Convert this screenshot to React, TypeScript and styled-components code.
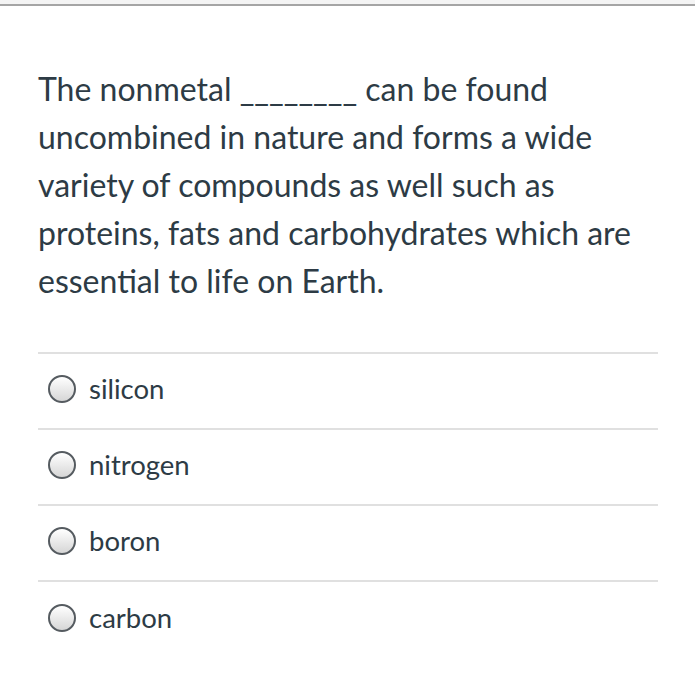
import React from "react";
import styled, { createGlobalStyle } from "styled-components";

const GlobalStyle = createGlobalStyle`
  html, body {
    margin: 0;
    padding: 0;
    background: #ffffff;
  }
  body {
    font-family: Lato, "Liberation Sans", sans-serif;
    color: #2d3b45;
  }
`;

const options = ["silicon", "nitrogen", "boron", "carbon"];

const Page = styled.div`
  width: 695px;
  height: 694px;
  box-sizing: border-box;
  border-top: 4px solid #f4f4f4;
  overflow: hidden;
`;

const TopRule = styled.div`
  height: 2px;
  background: #a5a5a5;
`;

const Question = styled.div`
  width: 620px;
  padding: 59px 0 0 38px;
`;

const Prompt = styled.p`
  margin: 0;
  font-size: 32px;
  line-height: 48px;
  color: #2d3b45;
`;

const Answers = styled.ul`
  list-style: none;
  margin: 47px 0 0;
  padding: 0;
  border-top: 2px solid #e0e0e0;
`;

const Answer = styled.li`
  display: flex;
  align-items: center;
  box-sizing: border-box;
  height: 76px;
  padding: 0 0 5px 10px;
  border-bottom: 2px solid #e0e0e0;

  &:last-child {
    border-bottom: none;
  }
`;

const Radio = styled.span`
  width: 24px;
  height: 24px;
  border-radius: 50%;
  border: 2px solid #555b60;
  background: linear-gradient(#ffffff, #d6d6d6);
  flex-shrink: 0;
`;

const Label = styled.span`
  margin-left: 13px;
  font-size: 27.5px;
  color: #2d3b45;
`;

export default function App() {
  return (
    <>
      <GlobalStyle />
      <Page>
        <TopRule />
        <Question>
          <Prompt>
            The nonmetal ________ can be found uncombined in nature and forms a
            wide variety of compounds as well such as proteins, fats and
            carbohydrates which are essential to life on Earth.
          </Prompt>
          <Answers>
            {options.map((o) => (
              <Answer key={o}>
                <Radio />
                <Label>{o}</Label>
              </Answer>
            ))}
          </Answers>
        </Question>
      </Page>
    </>
  );
}
